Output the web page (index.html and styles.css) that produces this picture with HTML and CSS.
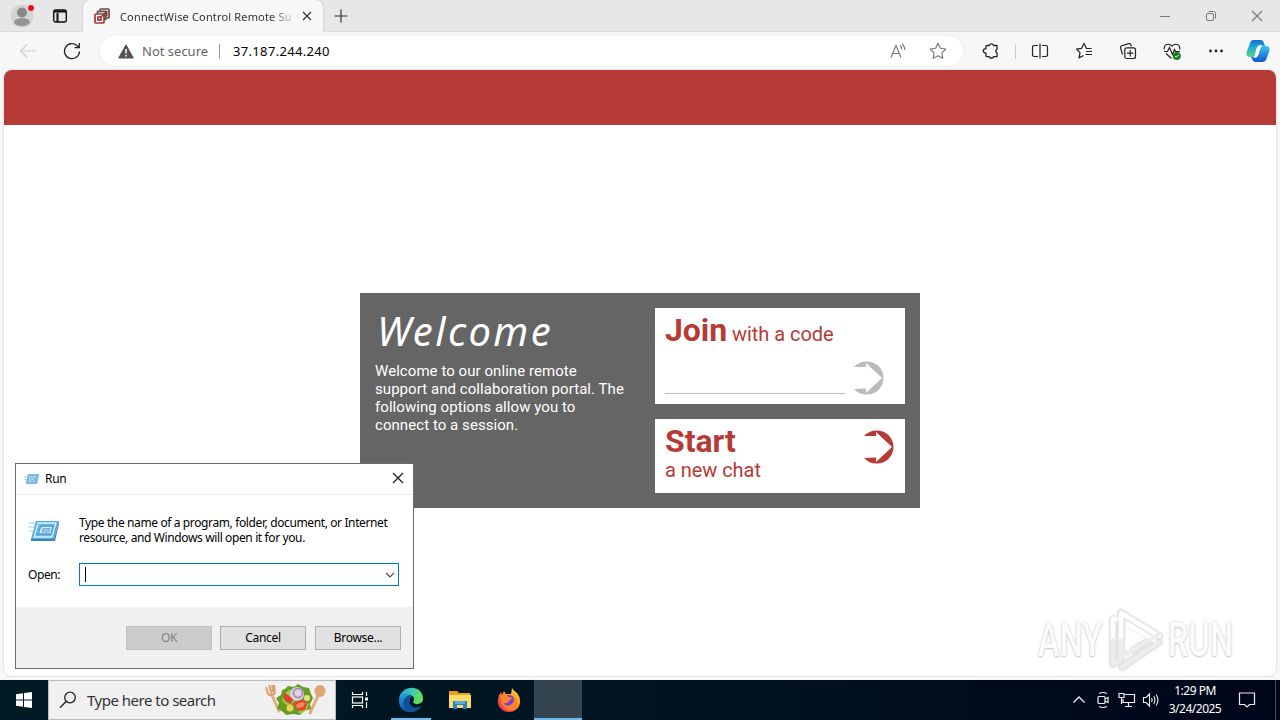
FILE: index.html
```html
<!DOCTYPE html>
<html lang="en">
<head>
    <meta charset="UTF-8">
    <meta name="viewport" content="width=device-width, initial-scale=1.0">
    <title>ConnectWise Control Remote Support</title>
    <link rel="stylesheet" href="styles.css">
</head>
<body>
    <div class="desktop">
        <div class="tabs">
            <div class="profile">
                <svg width="24" height="24" viewBox="0 0 24 24"><circle cx="12" cy="12" r="11.5" fill="#d5d4d3"/><circle cx="12" cy="8.5" r="5" fill="#8a8886"/><ellipse cx="12" cy="18" rx="8" ry="4" fill="#979593"/></svg>
                <span class="dot"></span>
            </div>
            <div class="workspaces">
                <svg width="16" height="16" viewBox="0 0 16 16" fill="none" stroke="#111" stroke-width="1.4"><rect x="1.7" y="2" width="12.6" height="12" rx="2"/><path d="M2 3.5h12M5.5 5v9" stroke-width="2"/></svg>
            </div>
            <div class="tab">
                <svg width="16" height="16" viewBox="0 0 16 16" fill="none"><g stroke-width="1.7"><rect x="6" y="1" width="9" height="9" rx="1" fill="#fff" stroke="#6b4545"/><rect x="8.7" y="3.7" width="4" height="4" stroke="#a53835"/><rect x="3.5" y="3.5" width="8" height="8" fill="#fff" stroke="#555"/><rect x="1" y="6" width="9" height="9" rx="1" fill="#fff" stroke="#a53835"/><rect x="4" y="9" width="3" height="3" stroke="#a53835"/><path d="M7 9l4-4" stroke="#a53835"/></g></svg>
                <span class="tab-title">ConnectWise Control Remote Su</span>
                <svg width="10" height="10" viewBox="0 0 10 10" stroke="#333" stroke-width="1.2"><path d="M1 1l8 8M9 1l-8 8"/></svg>
            </div>
            <div class="new-tab">
                <svg width="14" height="14" viewBox="0 0 14 14" stroke="#333" stroke-width="1.2"><path d="M7 .5v13M.5 7h13"/></svg>
            </div>
            <div class="window-buttons">
                <span><svg width="12" height="12" viewBox="0 0 12 12" stroke="#777"><path d="M1 6.5h10"/></svg></span>
                <span><svg width="12" height="12" viewBox="0 0 12 12" fill="none" stroke="#777"><rect x="1.5" y="3.5" width="7" height="7" rx="1.5"/><path d="M3.5 1.5h5a2 2 0 0 1 2 2v5"/></svg></span>
                <span><svg width="12" height="12" viewBox="0 0 12 12" stroke="#777" stroke-width="1.1"><path d="M1 1l10 10M11 1L1 11"/></svg></span>
            </div>
        </div>

        <div class="toolbar">
            <div class="tool back"><svg width="18" height="16" viewBox="0 0 18 16" fill="none" stroke="#cfcfcf" stroke-width="1.2"><path d="M17 8H2M8 1.5L1.5 8 8 14.5"/></svg></div>
            <div class="tool"><svg width="18" height="18" viewBox="0 0 18 18" fill="none" stroke="#222" stroke-width="1.3"><path d="M16.5 9.5A7.5 7.5 0 1 1 14.5 4L16 5.5M16.3 1v4.7h-4.7"/></svg></div>
            <div class="address">
                <svg width="16" height="15" viewBox="0 0 16 15"><path d="M8 .8L15.3 14H.7z" fill="#555" stroke="#555" stroke-linejoin="round"/><path d="M8 5v4.5M8 11v1.6" stroke="#fff" stroke-width="1.5"/></svg>
                <span class="not-secure">Not secure</span>
                <span class="url">37.187.244.240</span>
                <svg class="read" width="17" height="16" viewBox="0 0 17 16" fill="none" stroke="#777" stroke-width="1.1"><path d="M1 14.5L6 2.5l5 12M2.8 10.5h6.5M10 2.5c1.200.9 1.700 2.200 1.700 3.900M12 1c1.700 1.300 2.700 3.300 2.700 5.900"/></svg>
                <svg width="18" height="18" viewBox="0 0 18 18" fill="none" stroke="#777" stroke-width="1.1" stroke-linejoin="round"><path d="M9 1.3l2.4 4.9 5.4.8-3.9 3.8.9 5.4L9 13.7l-4.8 2.5.9-5.4L1.2 7l5.4-.8z"/></svg>
            </div>
            <div class="tool"><svg width="18" height="18" viewBox="0 0 18 18" fill="none" stroke="#222" stroke-width="1.3" stroke-linejoin="round"><path d="M5 3.500h2.300a2.200 2.200 0 0 1 4.200 0h3.500v3.800a1.900 1.900 0 0 0 0 3.600v3.800h-3.500a2.200 2.200 0 0 1-4.200 0H5q-1 0-1-1v-2.600c-3.600-.2-3.600-4.300 0-4.400V4.500q0-1 1-1z"/></svg></div>
            <span class="divider"></span>
            <div class="tool"><svg width="18" height="18" viewBox="0 0 18 18" fill="none" stroke="#222" stroke-width="1.2"><path d="M7 3.5H3.2a1.7 1.7 0 0 0-1.7 1.7v7.6c0 1 .7 1.7 1.7 1.7H7M11 3.5h3.8c1 0 1.7.7 1.7 1.7v7.6c0 1-.7 1.7-1.7 1.7H11M9 1.5v15"/></svg></div>
            <div class="tool"><svg width="18" height="18" viewBox="0 0 18 18" fill="none" stroke="#222" stroke-width="1.2" stroke-linejoin="round"><path d="M16.5 6.5h-5L9 1.5 6.5 6.3l-5 .8L5 10.7l-1 5.2 4.5-2.4M11 9.5h6M10.5 12.5H17"/></svg></div>
            <div class="tool"><svg width="18" height="18" viewBox="0 0 18 18" fill="none" stroke="#222" stroke-width="1.2"><path d="M3.5 12.5L1.6 5.8c-.3-1 .2-1.8 1.2-2.1l7-2c1-.3 1.9.2 2.1 1.2l.5 1.6"/><rect x="5.8" y="5.8" width="10.7" height="10.7" rx="2"/><path d="M11.2 8v6.4M8 11.2h6.4"/></svg></div>
            <div class="tool"><svg width="18" height="18" viewBox="0 0 18 18" fill="none" stroke="#222" stroke-width="1.2"><path d="M1.2 7.5C.7 2 6 .8 9 4.2 12 .8 17.3 2 16.8 7.5M1 9.5h3.500l2-4 3 7 2-5 1 2h4.500M3 11.5l5.5 5"/><circle cx="13.8" cy="14" r="4" fill="#13801a" stroke="none"/><path d="M11.9 14l1.3 1.3 2.5-2.5" stroke="#fff" stroke-width="1"/></svg></div>
            <div class="tool"><svg width="16" height="4" viewBox="0 0 16 4" fill="#222"><circle cx="2.5" cy="2" r="1.4"/><circle cx="8" cy="2" r="1.4"/><circle cx="13.5" cy="2" r="1.4"/></svg></div>
            <div class="tool copilot"><svg width="26" height="24" viewBox="0 0 26 24"><defs><linearGradient id="cl" x1="0" y1="0" x2="0" y2="1"><stop offset="0" stop-color="#126bd0"/><stop offset=".4" stop-color="#20a9d9"/><stop offset="1" stop-color="#5cd38a"/></linearGradient><linearGradient id="cr" x1="0" y1="0" x2="0" y2="1"><stop offset="0" stop-color="#36c5ea"/><stop offset="1" stop-color="#1358d1"/></linearGradient></defs><path d="M8 1h8q2 0 3 3l1 3h-4q-2 0-3 3l-2 6q-1 2-3 2H5Q0 18 2 12L5 4q1-3 3-3z" fill="url(#cl)"/><path d="M18 23h-8q-2 0-3-3l-1-2h4q2 0 3-3l2-6q1-2 3-2h3q5 0 3 6l-3 8q-1 2-4 2z" fill="url(#cr)"/><path d="M16 7h-1q-2 0-3 3l-2 8q2 0 3-3l2-6q0-1 1-2z" fill="#fff" stroke="#fff" stroke-width="1.3"/></svg></div>
        </div>

        <div class="page">
            <div class="page-header"></div>
            <div class="panel">
                <div class="intro">
                    <h1>Welcome</h1>
                    <p>Welcome to our online remote<br>support and collaboration portal. The<br>following options allow you to<br>connect to a session.</p>
                </div>
                <div class="options">
                    <div class="card join">
                        <div class="card-title"><b>Join</b> <span>with a code</span></div>
                        <div class="code-row">
                            <span class="code-input"></span>
                            <svg width="32" height="34" viewBox="0 0 32 34" fill="#bbb"><path d="M1 6A17 17 0 0 1 14 .5 16.500 16.500 0 0 1 14 33.500 17 17 0 0 1 1 28l12-.5V32L29 17 13 2v4z"/></svg>
                        </div>
                    </div>
                    <div class="card start">
                        <div class="card-title"><b>Start</b><br><span>a new chat</span></div>
                        <svg width="32" height="34" viewBox="0 0 32 34" fill="#b63a36"><path d="M1 6A17 17 0 0 1 14 .5 16.500 16.500 0 0 1 14 33.500 17 17 0 0 1 1 28l12-.5V32L29 17 13 2v4z"/></svg>
                    </div>
                </div>
            </div>
        </div>

        <div class="taskbar">
            <div class="start-button"><svg width="16" height="16" viewBox="0 0 16 16" fill="#fff"><path d="M0 2.300L7 1.300V7.500H0zM8 1.100L16 0v7.500H8zM0 8.500h7v6.200l-7-1zM8 8.500h8V16l-8-1.100z"/></svg></div>
            <div class="search">
                <svg width="18" height="18" viewBox="0 0 18 18" fill="none" stroke="#222" stroke-width="1.3"><circle cx="11" cy="6.500" r="5.300"/><path d="M7.300 10.300L1 16.800"/></svg>
                <span>Type here to search</span>
                <svg class="salad" width="64" height="36" viewBox="0 0 64 36">
                    <path d="M7 11l8 18" stroke="#e4ab7b" stroke-width="3" stroke-linecap="round"/>
                    <path d="M2 5l2 7q3 3 7-1l-1-8M5 3l2 7M8 3l1 7" fill="none" stroke="#dda06d" stroke-width="2"/>
                    <path d="M54 14l-8 17" stroke="#e4ab7b" stroke-width="3" stroke-linecap="round"/>
                    <ellipse cx="56" cy="9" rx="5.500" ry="6" fill="#dfa572"/>
                    <path d="M18 8q4-1 6-4l6 1 4-3 5 3 6 1 2 6 2 4-3 6 1 5-7 2-4 4-7-1-7 1-4-4-5-2 2-6-3-5 5-3z" fill="#669c25"/>
                    <path d="M20 12l6-5 5 5-4 5 4 3-7 4-6-5zM32 24l7-4 6 2-2 6-7 4z" fill="#9bcc43"/>
                    <circle cx="33" cy="12" r="7" fill="#ddd2e4"/><circle cx="34" cy="11" r="4.500" fill="none" stroke="#a580b2" stroke-width="1.500"/>
                    <path d="M20 10q-3 9 7 12l2-5z" fill="#dc432e"/><path d="M29 22q7-7 14-2 1 9-8 9z" fill="#e6492c"/><path d="M32 23q5-4 9-2l-2 4-6 1z" fill="#f18b64"/>
                    <circle cx="26" cy="26" r="3.500" fill="#ead34d"/><circle cx="43" cy="16" r="3" fill="#e8e37b"/>
                </svg>
            </div>
            <div class="app task-view"><svg width="18" height="18" viewBox="0 0 18 18" fill="none" stroke="#fff" stroke-width="1.200"><path d="M1.500 1v2.500h10V1M1.500 17v-2.500h10V17M15.500 1v4M15.500 11v6"/><rect x="1.500" y="6" width="10" height="6"/><path d="M15.500 6.500v3" stroke-width="3"/></svg></div>
            <div class="app open edge"><svg width="26" height="26" viewBox="0 0 26 26"><defs><linearGradient id="e1" x1="0" y1="0" x2="1" y2=".3"><stop offset="0" stop-color="#269fdf"/><stop offset=".5" stop-color="#35c4bd"/><stop offset="1" stop-color="#67df55"/></linearGradient><linearGradient id="e2" x1="0" y1="0" x2="0" y2="1"><stop offset="0" stop-color="#1d9ce1"/><stop offset="1" stop-color="#095cb5"/></linearGradient></defs><path d="M1 13C2-3 25-3 25 12c0 5-8 7-10 3 2-3 1-6-3-7C7 7 2 8 1 13z" fill="url(#e1)"/><path d="M1 13C2 6 10 6 12 8c-6 4-4 14 4 14 3 0 6-1 7-3-5 10-23 8-22-6z" fill="url(#e2)"/><path d="M12 8c-9 3-9 15 0 17 5 0 9-2 11-6-7 4-13-1-11-6 0-2 1-3 2-3q-1-2-2-2z" fill="#124f94"/></svg></div>
            <div class="app"><svg width="22" height="20" viewBox="0 0 22 20"><path d="M0 1h8l2 2h11v14H0z" fill="#e3a524"/><path d="M0 5h22v13H0z" fill="#ffdb68"/><path d="M0 1h8l2 3H0z" fill="#ef9a1b"/><path d="M4 19v-8h14v8h-4v-4H8v4z" fill="#2881c5"/><path d="M6 11h10v3H6z" fill="#5aaae0"/></svg></div>
            <div class="app"><svg width="24" height="24" viewBox="0 0 24 24"><defs><linearGradient id="ff" x1="1" y1="0" x2="0" y2="1"><stop offset="0" stop-color="#ffe63b"/><stop offset=".45" stop-color="#ff8b22"/><stop offset="1" stop-color="#ee1764"/></linearGradient></defs><path d="M4 4l1 3 2-4 2 3 5 0 1-6q2 3 5 5 4 5 3 10c-2 12-20 12-22 0Q0 9 4 4z" fill="url(#ff)"/><circle cx="12" cy="13" r="6" fill="#7b40c9"/><path d="M4 8q5-2 8 1l4 1q-3 1-4 3-1 3-6 2 4 5 9 1 3-3 1-8 7 5 3 11-7 7-13-1-3-5-2-10z" fill="#ff8429"/></svg></div>
            <div class="app open active"></div>
            <div class="tray">
                <span><svg width="14" height="14" viewBox="0 0 14 14" fill="none" stroke="#eee" stroke-width="1.300"><path d="M1.500 9.500L7 4l5.500 5.500"/></svg></span>
                <span><svg width="16" height="18" viewBox="0 0 16 18" fill="none" stroke="#eee" stroke-width="1.200"><rect x="3" y="5.500" width="7" height="7" rx="1"/><path d="M10 8l3-1.500v5L10 10M4 2.500q4-2 8 0M4 15.500q4 2 8 0"/></svg></span>
                <span><svg width="18" height="16" viewBox="0 0 18 16" fill="none" stroke="#eee" stroke-width="1.200"><path d="M7 2.500h9.500v8H5V7M10.500 10.500v4M7 14.500h7"/><path d="M1 1.500h5v4H1zM3.500 5.500V12"/></svg></span>
                <span><svg width="18" height="16" viewBox="0 0 18 16" fill="none" stroke="#eee" stroke-width="1.100"><path d="M1.500 5.500h2.700L7.500 2v12L4.200 10.500H1.500zM9.500 6q1.200 2 0 4M11.700 4.300q2.500 3.700 0 7.400M14 2.500q4 5.500 0 11"/></svg></span>
            </div>
            <div class="clock">1:29 PM<br>3/24/2025</div>
            <div class="notifications"><svg width="18" height="18" viewBox="0 0 18 18" fill="none" stroke="#eee" stroke-width="1.200"><path d="M1.500 2h15v11.500h-5L9 16l-2.500-2.500h-5z"/></svg></div>
            <div class="show-desktop"></div>
        </div>

        <div class="run-dialog">
            <div class="run-title">
                <svg width="16" height="12" viewBox="0 0 34 26"><path d="M8 2h25l-5 22H3z" fill="#7dbfe9"/><path d="M11 6h16l-3 14H8z" fill="#daf1fc" stroke="#5ba5da" stroke-width="2"/><path d="M14 10h9l-1 6h-9z" fill="#c3e2f4" stroke="#5f9fd0" stroke-width="2"/><path d="M0 8h7M1 14h5" stroke="#98cdec" stroke-width="2"/></svg>
                <span>Run</span>
                <svg class="run-close" width="12" height="12" viewBox="0 0 12 12" stroke="#111" stroke-width="1.100"><path d="M1 1l10 10M11 1L1 11"/></svg>
            </div>
            <div class="run-body">
                <div class="run-message">
                    <svg width="32" height="24" viewBox="0 0 32 24"><path d="M8 2h23l-5 18H3z" fill="#54a9df"/><path d="M3 20h23l5-18v3l-4 17H3z" fill="#3e85be"/><path d="M10 4h18l-4 14H6z" fill="#6bbbe9" stroke="#d9f3fd" stroke-width="1.300"/><path d="M13 7h12l-2 8H10z" fill="#d0eaf6" stroke="#4b9cd2" stroke-width="1.300"/><path d="M15 9.500h7l-1 3.500h-7z" fill="#9bcae8" stroke="#6f9ec2" stroke-width=".8"/><path d="M1 4h6M0 8h6M1 12h4" stroke="#9fd1ed"/></svg>
                    <p>Type the name of a program, folder, document, or Internet<br>resource, and Windows will open it for you.</p>
                </div>
                <div class="run-open">
                    <label>Open:</label>
                    <div class="run-input">
                        <span class="caret"></span>
                        <svg width="10" height="6" viewBox="0 0 10 6" fill="none" stroke="#444" stroke-width="1.200"><path d="M1 .8l4 4 4-4"/></svg>
                    </div>
                </div>
            </div>
            <div class="run-footer">
                <span class="button disabled">OK</span>
                <span class="button">Cancel</span>
                <span class="button browse">Browse...</span>
            </div>
        </div>

        <div class="watermark">
            <span>ANY</span>
            <svg width="56" height="64" viewBox="0 0 56 64" fill="none" stroke-linejoin="round" stroke-linecap="round"><g stroke="#e2e2e2" stroke-width="7"><path d="M13 5v44M13 5l38 23M5 11v45l7-3M51 34L14 59M26 42l20-12"/></g><path d="M13 49V5l38 23M5 32V11h3M20 16l26 16" stroke="#fff" stroke-width="4.500"/><path d="M5 32v24l7-3M13 32v17l37-22M51 34L14 59" stroke="#ededed" stroke-width="4"/></svg>
            <span>RUN</span>
        </div>
    </div>
</body>
</html>
```

FILE: styles.css
```css
* {
    box-sizing: border-box;
}
body {
    margin: 0;
    font-family: "Noto Sans", sans-serif;
    color: #000;
}
h1, p {
    margin: 0;
}
svg {
    display: block;
    flex: none;
}
.desktop {
    position: relative;
    display: flex;
    flex-direction: column;
    width: 1280px;
    height: 720px;
    overflow: hidden;
    background: #f7f7f7;
    white-space: nowrap;
}

/* browser */
.tabs {
    display: flex;
    height: 32px;
    background: #e7e7e7;
    border-bottom: 1px solid #dcdcdc;
}
.profile {
    position: relative;
    padding: 4px 0 0 10px;
    width: 48px;
}
.dot {
    position: absolute;
    left: 28px;
    top: 5px;
    width: 6px;
    height: 6px;
    border-radius: 50%;
    background: #e81123;
}
.workspaces {
    width: 35px;
    padding: 8px 0 0 4px;
}
.tab {
    display: flex;
    align-items: center;
    width: 240px;
    height: 32px;
    padding: 0 11px;
    background: #f7f7f7;
    border-radius: 7px 7px 0 0;
    box-shadow: 0 0 2px #aaa;
    clip-path: inset(0 -3px 0 -3px);
}
.tab-title {
    width: 175px;
    margin: 0 8px 0 10px;
    font-size: 11px;
    letter-spacing: 0.16px;
    color: #333;
    -webkit-mask-image: linear-gradient(to right, #000 150px, transparent 178px);
    mask-image: linear-gradient(to right, #000 150px, transparent 178px);
}
.new-tab {
    padding: 9px 0 0 11px;
}
.window-buttons {
    display: flex;
    margin-left: auto;
}
.window-buttons span {
    display: flex;
    align-items: center;
    justify-content: center;
    width: 46px;
    height: 32px;
}
.toolbar {
    display: flex;
    align-items: center;
    height: 38px;
    padding-left: 6px;
}
.tool {
    display: flex;
    align-items: center;
    justify-content: center;
    width: 44px;
    height: 38px;
}
.address {
    display: flex;
    align-items: center;
    width: 863px;
    height: 30px;
    margin: 0 6px;
    padding: 0 16px 0 18px;
    border-radius: 15px;
    background: #fff;
    box-shadow: 0 0 2px #e2e2e2;
    font-size: 13px;
}
.not-secure {
    width: 78px;
    margin: 0 13px 0 8px;
    border-right: 1px solid #999;
    line-height: 15px;
    color: #666;
}
.url {
    letter-spacing: 0.33px;
}
.read {
    margin: 0 22px 0 auto;
}
.divider {
    width: 1px;
    height: 15px;
    margin: 0 2px;
    background: #ccc;
}
.copilot {
    width: 40px;
}

/* portal page */
.page {
    width: 1272px;
    height: 606px;
    margin: 0 4px 4px;
    overflow: hidden;
    background: #fff;
    border-radius: 8px;
    box-shadow: 0 0 2px #bbb;
}
.page-header {
    height: 55px;
    background: #b63a36;
}
.panel {
    display: flex;
    justify-content: space-between;
    width: 560px;
    height: 215px;
    margin: 168px auto 0;
    padding: 15px;
    background: #656565;
    font-family: Roboto, sans-serif;
    color: #fff;
}
.intro h1 {
    height: 54px;
    padding-left: 2px;
    font-family: "Noto Sans", sans-serif;
    font-size: 40px;
    font-style: italic;
    font-weight: 400;
    line-height: 45px;
    letter-spacing: 2.4px;
}
.intro p {
    font-size: 15px;
    line-height: 18px;
    letter-spacing: 0.06px;
}
.options {
    width: 250px;
}
.card {
    padding: 4px 11px 4px 10px;
    background: #fff;
    color: #b63a36;
}
.card-title {
    font-size: 20px;
    line-height: 36px;
    letter-spacing: -0.05px;
}
.card b {
    font-size: 32px;
}
.join {
    height: 96px;
    margin-bottom: 15px;
}
.code-row {
    display: flex;
    padding-top: 9px;
}
.code-input {
    width: 180px;
    height: 33px;
    margin-right: 8px;
    border-bottom: 1px solid #bbb;
}
.start {
    display: flex;
    justify-content: space-between;
    height: 74px;
    padding-top: 8px;
}
.start .card-title {
    line-height: 28px;
}
.start span {
    position: relative;
    top: -3px;
}
.start svg {
    margin: 3px -1px 0 0;
}

/* taskbar */
.taskbar {
    display: flex;
    height: 40px;
    background: linear-gradient(to right, #001b25, #001521 45%, #00061a);
    color: #fff;
}
.start-button {
    width: 48px;
    padding: 12px 16px;
}
.search {
    display: flex;
    align-items: center;
    width: 288px;
    padding-left: 10px;
    background: #f0f0f0;
    border: 1px solid #bbb;
    color: #333;
    font-size: 15px;
    letter-spacing: -0.5px;
}
.search span {
    width: 177px;
    margin-left: 10px;
}
.app {
    display: flex;
    align-items: center;
    justify-content: center;
    width: 48px;
    margin-right: 1px;
}
.task-view {
    margin-right: 3px;
}
.open {
    position: relative;
}
.open::after {
    content: "";
    position: absolute;
    left: 4px;
    right: 4px;
    bottom: 0;
    height: 2px;
    background: #76b9ed;
}
.active {
    background: #34454f;
}
.active::after {
    left: 0;
    right: 0;
}
.tray {
    display: flex;
    margin-left: auto;
}
.tray span {
    display: flex;
    align-items: center;
    justify-content: center;
    width: 24px;
}
.clock {
    width: 64px;
    padding-top: 2px;
    font-size: 12px;
    line-height: 18px;
    letter-spacing: -0.5px;
    text-align: center;
}
.notifications {
    display: flex;
    align-items: center;
    justify-content: center;
    width: 40px;
}
.show-desktop {
    width: 5px;
    margin-left: 8px;
    border-left: 1px solid #46505c;
}

/* run dialog */
.run-dialog {
    position: absolute;
    left: 15px;
    top: 463px;
    width: 399px;
    height: 206px;
    border: 1px solid #6c6c6c;
    background: #fff;
    font-size: 12px;
}
.run-title {
    display: flex;
    align-items: center;
    height: 31px;
    padding: 0 9px 1px 8px;
    border-bottom: 1px solid #ececec;
}
.run-title span {
    margin-left: 5px;
    letter-spacing: -0.3px;
}
.run-close {
    margin: -1px 0 0 auto;
}
.run-body {
    height: 112px;
    padding: 21px 14px 0 12px;
}
.run-message {
    display: flex;
    height: 47px;
}
.run-message svg {
    margin: 3px 19px 0 0;
}
.run-message p {
    margin-top: -1px;
    line-height: 15px;
    letter-spacing: -0.38px;
}
.run-open {
    display: flex;
    align-items: center;
}
.run-open label {
    width: 51px;
    letter-spacing: -0.4px;
}
.run-input {
    display: flex;
    align-items: center;
    justify-content: space-between;
    width: 320px;
    height: 23px;
    padding: 0 3px 0 5px;
    border: 1px solid #0078d7;
}
.caret {
    width: 1px;
    height: 15px;
    background: #000;
}
.run-footer {
    display: flex;
    justify-content: flex-end;
    height: 61px;
    padding: 19px 12px 0 0;
    background: #f0f0f0;
}
.button {
    width: 86px;
    height: 24px;
    margin-left: 8px;
    border: 1px solid #adadad;
    background: #e1e1e1;
    line-height: 22px;
    text-align: center;
    letter-spacing: -0.3px;
}
.browse {
    margin-left: 9px;
}
.disabled {
    border-color: #bfbfbf;
    background: #ccc;
    color: #838383;
}

.watermark {
    position: absolute;
    left: 1038px;
    top: 608px;
    display: flex;
    align-items: center;
    font-family: Roboto, sans-serif;
    font-weight: 500;
    color: #fbfbfb;
    text-shadow: 0 0 3px #ccc, 0 1px 2px #ccc;
}
.watermark span {
    width: 62px;
    font-size: 48px;
    line-height: 64px;
    transform: scaleX(0.68);
    transform-origin: left;
}
.watermark svg {
    margin: 0 4px 0 8px;
    filter: drop-shadow(0 0 1px #ddd);
}
```
